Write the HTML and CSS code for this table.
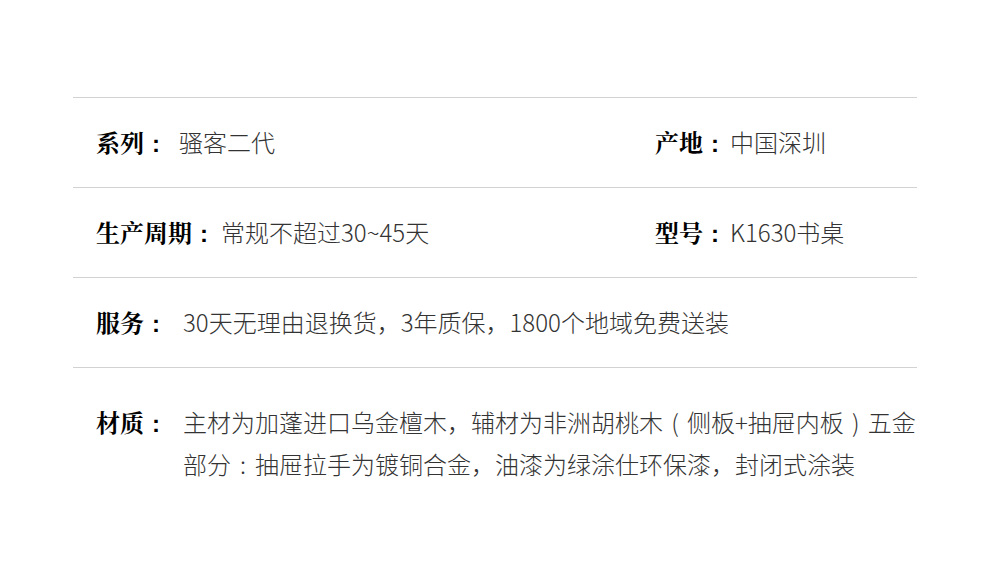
FILE: index.html
```html
<!DOCTYPE html>
<html lang="zh-CN">
<head>
<meta charset="utf-8">
<title>产品参数</title>
<link rel="stylesheet" href="styles.css">
</head>
<body>
<div class="spec">
  <div class="row two">
    <div class="cell"><span class="label">系列<span class="p">:</span></span><span class="value v1">骚客二代</span></div>
    <div class="cell"><span class="label">产地<span class="p">:</span></span><span class="value v2">中国深圳</span></div>
  </div>
  <div class="row two">
    <div class="cell"><span class="label">生产周期<span class="p">:</span></span><span class="value v3">常规不超过30~45天</span></div>
    <div class="cell"><span class="label">型号<span class="p">:</span></span><span class="value v2">K1630书桌</span></div>
  </div>
  <div class="row">
    <div class="cell"><span class="label">服务<span class="p">:</span></span><span class="value v4">30天无理由退换货，3年质保，1800个地域免费送装</span></div>
  </div>
  <div class="row multi">
    <div class="cell"><span class="label">材质<span class="p">:</span></span><span class="value v4 block">主材为加蓬进口乌金檀木，辅材为非洲胡桃木<span class="p">(</span>侧板+抽屉内板<span class="p">)</span>五金部分<span class="p">:</span>抽屉拉手为镀铜合金，油漆为绿涂仕环保漆，封闭式涂装</span></div>
  </div>
</div>
</body>
</html>
```
FILE: styles.css
```css
html, body {
  margin: 0;
  padding: 0;
  background: #fff;
}
body {
  font-family: "Noto Sans CJK SC", "Noto Sans", sans-serif;
}
.spec {
  margin-left: 73px;
  width: 844px;
  padding-top: 97px;
}
.row {
  border-top: 1px solid #d2d2d2;
  height: 89px;
  display: flex;
  align-items: center;
  padding-left: 23px;
}
.row.two {
  display: grid;
  grid-template-columns: 559px 1fr;
  align-items: center;
}
.row.multi {
  height: auto;
  align-items: flex-start;
  padding-top: 33px;
}
.cell {
  display: flex;
  align-items: baseline;
  font-size: 24px;
  line-height: 42px;
}
.label {
  font-family: "Noto Serif CJK SC", "Noto Sans CJK SC", serif;
  font-weight: 700;
  color: #000;
  white-space: nowrap;
}
.p {
  display: inline-block;
  width: 1em;
  text-align: center;
}
.label .p {
  font-family: "Liberation Sans", sans-serif;
  font-weight: 700;
}
.value {
  font-family: "Noto Sans CJK SC", sans-serif;
  font-weight: 300;
  color: #333;
}
.value .p {
  font-family: "Noto Sans CJK SC", sans-serif;
}
.v1 { margin-left: 11px; }
.v2 { margin-left: 3px; }
.v3 { margin-left: 5px; }
.v4 { margin-left: 15px; }
.block {
  display: block;
  width: 740px;
}
```
